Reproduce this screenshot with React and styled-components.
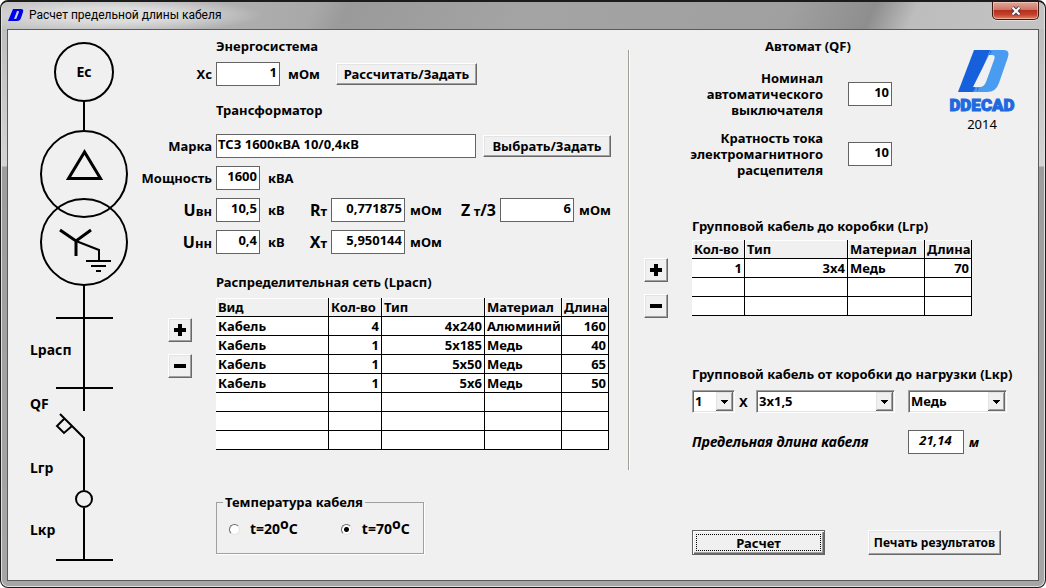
import React from "react";
import styled, { createGlobalStyle } from "styled-components";

const Reset = createGlobalStyle`
  *, *::before, *::after { box-sizing: border-box; }
  body { margin: 0; background: #fff; }
  button, input, select { font: inherit; color: inherit; margin: 0; }
`;

const Window = styled.div`
  min-height: 100vh;
  display: flex;
  flex-direction: column;
  padding: 0 6px 6px;
  border: 1px solid #1c1c1c;
  border-top-width: 2px;
  border-radius: 8px;
  background: linear-gradient(180deg, #b9b9b9 0, #d4d4d4 164px, #9d9d9d 165px, #a6a6a6 100%);
  box-shadow: inset 0 0 0 1px #e0e0e0;
  font: bold 13px/16px "Noto Sans", "Open Sans", sans-serif;
  color: #000;
`;

const TitleBar = styled.header`
  display: flex;
  align-items: center;
  gap: 5px;
  height: 27px;
  margin: 0 -5px;
  padding: 0 0 2px 6px;
  border-radius: 6px 6px 0 0;
  background:
    radial-gradient(ellipse 150px 18px at 110px 13px, #dcdcdc 40%, rgba(220, 220, 220, 0) 100%),
    linear-gradient(115deg, #c4c4c4 0, #a8a8a8 30%, #9a9a9a 33%, #a4a4a4 50%, #a0a0a0 75%, #8e8e8e 83%, #bdbdbd 87%, #c4c4c4 100%);
  font: 12px/16px Roboto, "Noto Sans", sans-serif;
`;

const Title = styled.h1`
  flex: 1;
  margin: 0;
  font: inherit;
`;

const CloseButton = styled.button`
  align-self: flex-start;
  display: flex;
  align-items: center;
  justify-content: center;
  width: 47px;
  height: 18px;
  margin-right: 5px;
  padding: 0;
  border: 1px solid #3f1a14;
  border-top: 0;
  border-radius: 0 0 5px 5px;
  background: linear-gradient(180deg, #e0a89c 0, #cf7564 45%, #b4301c 50%, #c4422c 75%, #e08468 100%);
  box-shadow: inset 0 0 0 1px rgba(255, 220, 210, 0.5), 0 1px 0 #e0e0e0;
`;

const Client = styled.main`
  flex: 1;
  display: flex;
  border: 1px solid #5a5a5a;
  background: #f0f0f0;
`;

const Scheme = styled.svg`
  flex: none;
  display: block;
  width: 132px;
  height: 548px;
  fill: none;
  stroke: #000;
  stroke-width: 2;
  text {
    fill: #000;
    stroke: none;
    font-size: 14px;
  }
`;

const Supply = styled.section`
  flex: 1 0 488px;
  display: flex;
  flex-direction: column;
  gap: 8px;
  padding-top: 8px;
`;

const Heading = styled.h2`
  margin: ${(p) => p.$margin || "0"};
  font: inherit;
  text-align: ${(p) => p.$align || "left"};
`;

const Row = styled.div`
  display: flex;
  align-items: center;
  margin-top: ${(p) => p.$top || 0}px;
`;

const Label = styled.label`
  width: ${(p) => p.$width || 76}px;
  padding-right: 4px;
  text-align: right;
  white-space: pre;
  font-size: ${(p) => (p.$big ? 16 : 13)}px;
  small { font-size: 13px; }
`;

const Field = styled.input`
  width: ${(p) => p.$width}px;
  height: 24px;
  padding: 0 2px 4px 1px;
  border: 1px solid #646464;
  border-radius: 0;
  background: #fff;
  text-align: ${(p) => p.$align || "right"};
  font-style: ${(p) => (p.$italic ? "italic" : "normal")};
  outline: 0;
`;

const Unit = styled.span`
  padding-left: ${(p) => p.$gap || 8}px;
  width: ${(p) => (p.$width ? p.$width + "px" : "auto")};
`;

const PushButton = styled.button`
  width: ${(p) => p.$width}px;
  height: ${(p) => p.$height || 22}px;
  margin-left: ${(p) => p.$gap || 0}px;
  padding: 0;
  display: flex;
  align-items: center;
  justify-content: center;
  white-space: nowrap;
  border: 1px solid;
  border-color: #fff #696969 #696969 #fff;
  border-radius: 0;
  background: #f0f0f0;
  box-shadow: inset -1px -1px 0 #a0a0a0, inset 1px 1px 0 #e3e3e3;
`;

const DefaultButton = styled(PushButton)`
  border-color: #646464;
  box-shadow: inset 1px 1px 0 #fff, inset -1px -1px 0 #696969, inset -2px -2px 0 #a0a0a0;
  outline: 1px dotted #000;
  outline-offset: -5px;
`;

const PrintButton = styled(PushButton)`
  font-size: 12px;
`;

const ListArea = styled.div`
  display: flex;
  align-items: flex-start;
`;

const Steppers = styled.div`
  display: flex;
  flex-direction: column;
  gap: 12px;
  padding: ${(p) => p.$padding};
`;

const Grid = styled.table`
  table-layout: fixed;
  width: ${(p) => p.$width}px;
  border-collapse: separate;
  border-spacing: 0;
  background: #fff;
  th, td {
    height: 19px;
    padding: 0 2px;
    border: solid #000;
    border-width: 0 1px 1px 0;
    line-height: 16px;
    text-align: left;
    white-space: nowrap;
  }
  th {
    padding-right: 0;
    background: #f0f0f0;
    box-shadow: inset 1px 1px 0 #fff;
  }
  td.number { text-align: right; }
`;

const Temperature = styled.fieldset`
  display: flex;
  gap: 43px;
  width: 208px;
  height: 60px;
  margin: 36px 0 0 76px;
  padding: 10px 12px;
  border: 1px solid #a0a0a0;
  box-shadow: 1px 1px 0 #fff;
  legend { padding: 0 2px; margin-left: -6px; }
`;

const RadioLabel = styled.label`
  display: flex;
  align-items: center;
  gap: 10px;
  height: 18px;
  font-size: 14px;
  white-space: nowrap;
  sup { font-size: 14px; line-height: 0; vertical-align: 5px; }
`;

const Radio = styled.input`
  appearance: none;
  width: 11px;
  height: 11px;
  border: 1px solid;
  border-color: #696969 #e3e3e3 #e3e3e3 #696969;
  border-radius: 50%;
  background: #fff;
  &:checked { background: radial-gradient(circle, #000 0 2px, #fff 3px); }
`;

const Divider = styled.div`
  flex: none;
  width: 2px;
  height: 420px;
  margin-top: 20px;
  border-left: 1px solid #a0a098;
  background: #fff;
`;

const Group = styled.section`
  flex: 1 0 408px;
  padding: 8px 0 0 14px;
`;

const Breaker = styled.div`
  display: flex;
  align-items: flex-start;
  gap: 56px;
`;

const BreakerForm = styled.div`
  width: 248px;
  display: flex;
  flex-direction: column;
  gap: 12px;
`;

const BreakerRow = styled.label`
  display: flex;
  align-items: center;
  justify-content: flex-end;
  gap: 25px;
  text-align: right;
  span { width: 140px; }
`;

const Brand = styled.div`
  display: flex;
  flex-direction: column;
  align-items: center;
  padding-top: 11px;
  font-weight: normal;
`;

const LogoDrawing = styled.svg`
  display: block;
  width: 68px;
  height: 67px;
  overflow: visible;
`;

const Wordmark = styled.text`
  fill: #1e68e0;
  stroke: #1e68e0;
  stroke-width: 1;
  font: 900 17px Roboto, "Noto Sans", sans-serif;
`;

const Indent = styled.div`
  padding-left: 48px;
`;

const Combo = styled.span`
  position: relative;
  width: ${(p) => p.$width}px;
  height: 23px;
  margin-right: ${(p) => p.$after || 0}px;
  svg { position: absolute; right: 2px; top: 2px; pointer-events: none; }
`;

const Select = styled.select`
  appearance: none;
  width: 100%;
  height: 23px;
  padding: 0 20px 2px 2px;
  border: 1px solid;
  border-color: #a0a0a0 #fff #fff #a0a0a0;
  border-radius: 0;
  background: #fff;
  box-shadow: inset 1px 1px 0 #696969, inset -1px -1px 0 #e3e3e3;
`;

const LimitLabel = styled.label`
  width: 216px;
  font-size: 14px;
  font-style: italic;
`;

const Actions = styled.div`
  display: flex;
  gap: 43px;
  margin-top: 76px;
`;

function Dropdown({ label, value, width, after }) {
  return (
    <Combo $width={width} $after={after}>
      <Select aria-label={label} defaultValue={value}>
        <option>{value}</option>
      </Select>
      <svg width="17" height="19" shapeRendering="crispEdges" aria-hidden="true">
        <path d="M0 0h17v19H0z" fill="#f0f0f0" />
        <path d="M.5 18.500V.5h16" fill="none" stroke="#e3e3e3" />
        <path d="M15.500 1v16.500H1" fill="none" stroke="#a0a0a0" />
        <path d="M16.500 0v18.500H0" fill="none" stroke="#696969" />
        <path d="M5 8h7v1h-1v1h-1v1H9v1H8v-1H7v-1H6V9H5z" fill="#000" />
      </svg>
    </Combo>
  );
}

function StepperButtons({ padding }) {
  return (
    <Steppers $padding={padding}>
      <PushButton $width={24} $height={24} aria-label="Добавить строку">
        <svg width="12" height="12" shapeRendering="crispEdges"><path d="M4 0h4v4h4v4H8v4H4V8H0V4h4z" /></svg>
      </PushButton>
      <PushButton $width={24} $height={24} aria-label="Удалить строку">
        <svg width="12" height="4" shapeRendering="crispEdges"><path d="M0 0h12v4H0z" /></svg>
      </PushButton>
    </Steppers>
  );
}

function CableTable({ columns, rows }) {
  return (
    <Grid $width={columns.reduce((sum, c) => sum + c.width, 0)}>
      <colgroup>{columns.map((c) => <col key={c.name} width={c.width} />)}</colgroup>
      <thead>
        <tr>{columns.map((c) => <th key={c.name} scope="col">{c.name}</th>)}</tr>
      </thead>
      <tbody>
        {rows.map((row, i) => (
          <tr key={i}>
            {columns.map((c, j) => <td key={c.name} className={c.number ? "number" : undefined}>{row[j]}</td>)}
          </tr>
        ))}
      </tbody>
    </Grid>
  );
}

const groupColumns = [
  { name: "Кол-во", width: 53, number: true },
  { name: "Тип", width: 103, number: true },
  { name: "Материал", width: 77 },
  { name: "Длина", width: 47, number: true },
];
const networkColumns = [{ name: "Вид", width: 113 }, ...groupColumns];
const networkRows = [
  ["Кабель", "4", "4x240", "Алюминий", "160"],
  ["Кабель", "1", "5x185", "Медь", "40"],
  ["Кабель", "1", "5x50", "Медь", "65"],
  ["Кабель", "1", "5x6", "Медь", "50"],
  [], [], [],
];
const groupRows = [["1", "3x4", "Медь", "70"], [], []];

function SchemeDrawing() {
  return (
    <Scheme viewBox="8 30 132 548" role="img" aria-label="Схема">
      <circle cx="84" cy="72" r="29" />
      <path d="M84 101v29" />
      <circle cx="84" cy="174" r="43" />
      <path d="M84.500 152L68.500 178.500h32z" strokeWidth="3" />
      <circle cx="84" cy="242" r="43" />
      <path d="M60 230l16 11 15-11M76 240v16" strokeWidth="3" />
      <path d="M76 241l23 9v11M86 261h25M91 266h15M96 271h5" />
      <path d="M84 285v126M56 318h57M56 388h57" />
      <path d="M60 414l24 24v52M65 418l-8 8 7 7 8-7" />
      <circle cx="84" cy="499" r="8" />
      <path d="M84 508v52M56 560h57" />
      <text x="84" y="77" textAnchor="middle">Ес</text>
      <text x="30" y="355">Lрасп</text>
      <text x="30" y="409">QF</text>
      <text x="30" y="473">Lгр</text>
      <text x="30" y="535">Lкр</text>
    </Scheme>
  );
}

function Logo() {
  return (
    <LogoDrawing viewBox="948 49 68 67" aria-label="DDECAD" role="img">
      <path d="M974 50h20l-17 42h-19z" fill="#1660dc" />
      <path d="M990 50h14q6 0 4 7l-9 26q-3 9-12 9h-14z" fill="#4a9cf0" />
      <path d="M988 51l-14 40M991 51l-14 40" stroke="#1660dc" strokeDasharray="2 1" />
      <path d="M989 55h3q4 0 2 5l-8 22q-2 5-6 5h-7z" fill="#f0f0f0" />
      <Wordmark x="982" y="111" textAnchor="middle">DDECAD</Wordmark>
    </LogoDrawing>
  );
}

export default function App() {
  return (
    <Window>
      <Reset />
      <TitleBar>
        <svg width="16" height="14" viewBox="0 0 16 14" aria-hidden="true">
          <path fillRule="evenodd" fill="#0000f0" d="M5 1h8q3 0 2 3l-2 6q-1 3-4 3H0zM9 3L6 11h1q2 0 2-2l2-5q0-1-1-1z" />
        </svg>
        <Title>Расчет предельной длины кабеля</Title>
        <CloseButton aria-label="Закрыть">
          <svg width="12" height="10" viewBox="0 0 12 10">
            <path d="M2.500 1.500l7 7M9.500 1.500l-7 7" stroke="#4a3c48" strokeWidth="4" />
            <path d="M2.500 1.500l7 7M9.500 1.500l-7 7" stroke="#fff" strokeWidth="2" />
          </svg>
        </CloseButton>
      </TitleBar>
      <Client>
        <SchemeDrawing />
        <Supply>
          <Heading $margin="0 0 0 76px">Энергосистема</Heading>
          <Row>
            <Label htmlFor="xc">Xc</Label>
            <Field id="xc" $width={64} defaultValue="1" />
            <Unit $width={56}>мОм</Unit>
            <PushButton $width={141}>Рассчитать/Задать</PushButton>
          </Row>
          <Heading $margin="8px 0 8px 76px">Трансформатор</Heading>
          <Row>
            <Label htmlFor="brand">Марка</Label>
            <Field id="brand" $width={260} $align="left" defaultValue="ТСЗ 1600кВА 10/0,4кВ" />
            <PushButton $width={128} $gap={7}>Выбрать/Задать</PushButton>
          </Row>
          <Row>
            <Label htmlFor="power">Мощность</Label>
            <Field id="power" $width={44} defaultValue="1600" />
            <Unit>кВА</Unit>
          </Row>
          <Row>
            <Label htmlFor="uhigh" $big>U<small>вн</small></Label>
            <Field id="uhigh" $width={44} defaultValue="10,5" />
            <Unit $width={28}>кВ</Unit>
            <Label htmlFor="rt" $width={43} $big>R<small>т</small></Label>
            <Field id="rt" $width={74} defaultValue="0,771875" />
            <Unit $gap={5} $width={40}>мОм</Unit>
            <Label htmlFor="zt" $width={55} $big>Z<small> т</small>/3</Label>
            <Field id="zt" $width={74} defaultValue="6" />
            <Unit $gap={5}>мОм</Unit>
          </Row>
          <Row>
            <Label htmlFor="ulow" $big>U<small>нн</small></Label>
            <Field id="ulow" $width={44} defaultValue="0,4" />
            <Unit $width={28}>кВ</Unit>
            <Label htmlFor="xt" $width={43} $big>X<small>т</small></Label>
            <Field id="xt" $width={74} defaultValue="5,950144" />
            <Unit $gap={5}>мОм</Unit>
          </Row>
          <Heading $margin="12px 0 0 76px">Распределительная сеть (Lрасп)</Heading>
          <ListArea>
            <StepperButtons padding="20px 24px 0 28px" />
            <CableTable columns={networkColumns} rows={networkRows} />
          </ListArea>
          <Temperature>
            <legend>Температура кабеля</legend>
            <RadioLabel><Radio type="radio" name="temp" /><span>t=20<sup>o</sup>C</span></RadioLabel>
            <RadioLabel><Radio type="radio" name="temp" defaultChecked /><span>t=70<sup>o</sup>C</span></RadioLabel>
          </Temperature>
        </Supply>
        <Divider />
        <Group>
          <Breaker>
            <BreakerForm>
              <Heading $align="center" $margin="0 0 4px 80px">Автомат (QF)</Heading>
              <BreakerRow><span>Номинал автоматического выключателя</span><Field $width={44} defaultValue="10" /></BreakerRow>
              <BreakerRow><span>Кратность тока электромагнитного расцепителя</span><Field $width={44} defaultValue="10" /></BreakerRow>
            </BreakerForm>
            <Brand><Logo />2014</Brand>
          </Breaker>
          <Indent><Heading $margin="40px 0 6px">Групповой кабель до коробки (Lгр)</Heading></Indent>
          <ListArea>
            <StepperButtons padding="18px 24px 0 0" />
            <CableTable columns={groupColumns} rows={groupRows} />
          </ListArea>
          <Indent>
            <Heading $margin="48px 0 8px">Групповой кабель от коробки до нагрузки (Lкр)</Heading>
            <Row>
              <Dropdown label="Количество" value="1" width={43} />
              <Unit $gap={4} $width={21}>X</Unit>
              <Dropdown label="Тип" value="3x1,5" width={139} after={13} />
              <Dropdown label="Материал" value="Медь" width={99} />
            </Row>
            <Row $top={17}>
              <LimitLabel htmlFor="limit">Предельная длина кабеля</LimitLabel>
              <Field id="limit" $width={56} $italic $align="center" defaultValue="21,14" />
              <Unit $gap={5}><i>м</i></Unit>
            </Row>
            <Actions>
              <DefaultButton $width={133} $height={25}>Расчет</DefaultButton>
              <PrintButton $width={133} $height={25}>Печать результатов</PrintButton>
            </Actions>
          </Indent>
        </Group>
      </Client>
    </Window>
  );
}
